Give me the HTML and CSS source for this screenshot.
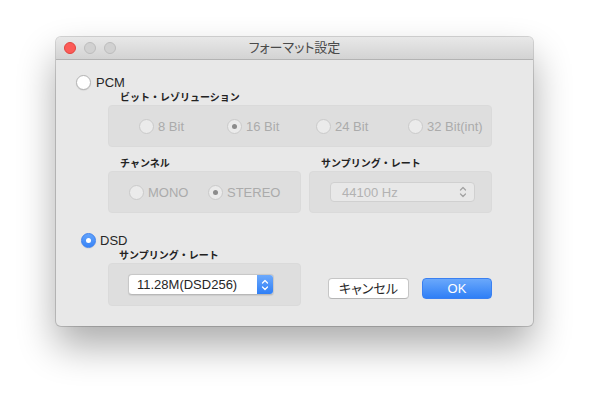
FILE: index.html
```html
<!DOCTYPE html>
<html lang="ja">
<head>
<meta charset="utf-8">
<title>フォーマット設定</title>
<link rel="stylesheet" href="styles.css">
</head>
<body>
<div class="window">
  <div class="titlebar">
    <div class="lights">
      <span class="light close"></span>
      <span class="light"></span>
      <span class="light"></span>
    </div>
    <div class="title">フォーマット設定</div>
    <div></div>
  </div>
  <div class="content">
    <div class="radio-row pcm"><span class="radio"></span><span class="rtext">PCM</span></div>
    <div class="group-label res-label">ビット・レゾリューション</div>
    <div class="box res">
      <div class="opt"><span class="radio dis"></span>8 Bit</div>
      <div class="opt"><span class="radio dis on"></span>16 Bit</div>
      <div class="opt"><span class="radio dis"></span>24 Bit</div>
      <div class="opt"><span class="radio dis"></span>32 Bit(int)</div>
    </div>
    <div class="pair">
      <div class="col ch-col">
        <div class="group-label">チャンネル</div>
        <div class="box ch">
          <div class="opt"><span class="radio dis"></span>MONO</div>
          <div class="opt"><span class="radio dis on"></span>STEREO</div>
        </div>
      </div>
      <div class="col sr-col">
        <div class="group-label">サンプリング・レート</div>
        <div class="box sr">
          <div class="popup dis">
            <span class="ptext">44100 Hz</span>
            <span class="arrows"><svg width="8" height="14" viewBox="0 0 8 14"><polyline points="1.5,5 4,2.5 6.5,5"/><polyline points="1.5,9 4,11.5 6.5,9"/></svg></span>
          </div>
        </div>
      </div>
    </div>
    <div class="radio-row dsd"><span class="radio sel"></span><span class="rtext">DSD</span></div>
    <div class="bottom">
      <div class="col ch-col">
        <div class="group-label dsd-label">サンプリング・レート</div>
        <div class="box dsdbox">
          <div class="popup">
            <span class="ptext">11.28M(DSD256)</span>
            <span class="arrows"><svg width="8" height="14" viewBox="0 0 8 14"><polyline points="1.5,5 4,2.5 6.5,5"/><polyline points="1.5,9 4,11.5 6.5,9"/></svg></span>
          </div>
        </div>
      </div>
      <div class="buttons">
        <button class="btn cancel">キャンセル</button>
        <button class="btn ok">OK</button>
      </div>
    </div>
  </div>
</div>
</body>
</html>
```
FILE: styles.css
```css
html, body {
  margin: 0;
  padding: 0;
  background: #ffffff;
}
body {
  font-family: "Liberation Sans", "Noto Sans CJK JP", sans-serif;
  font-size: 13px;
  color: #262626;
  min-height: 400px;
  padding-top: 1px;
  box-sizing: border-box;
}
.window {
  width: 477px;
  height: 289px;
  margin: 36px 0 0 56px;
  background: #e8e8e8;
  border-radius: 5px;
  overflow: hidden;
  box-shadow: 0 0 0 1px rgba(0,0,0,0.16), 0 20px 38px rgba(0,0,0,0.33);
}
.titlebar {
  height: 22px;
  border-bottom: 1px solid #b3b3b3;
  background: linear-gradient(#e8e8e8, #d3d3d3);
  display: grid;
  grid-template-columns: 1fr auto 1fr;
  align-items: center;
}
.lights {
  display: flex;
  gap: 8px;
  padding-left: 8px;
}
.light {
  width: 12px;
  height: 12px;
  border-radius: 50%;
  box-sizing: border-box;
  background: #d1d1d1;
  border: 1px solid #bcbcbc;
}
.light.close {
  background: #fc5b57;
  border-color: #e0443e;
}
.title {
  font-size: 13px;
  color: #4a4a4a;
  font-feature-settings: "palt";
  line-height: 22px;
}
.content {
  display: flex;
  flex-direction: column;
}
.radio-row {
  display: flex;
  align-items: center;
  height: 15px;
}
.radio-row.pcm {
  margin: 15px 0 0 20px;
  gap: 5px;
}
.radio-row.dsd {
  margin: 20px 0 0 25px;
  gap: 4px;
}
.rtext {
  font-size: 13px;
  color: #262626;
}
.radio {
  width: 15px;
  height: 15px;
  border-radius: 50%;
  box-sizing: border-box;
  border: 1px solid #b4b4b4;
  background: #ffffff;
  box-shadow: 0 0.5px 1px rgba(0,0,0,0.12);
  flex: none;
  display: grid;
  place-items: center;
}
.radio.dis {
  background: #ebebeb;
  border-color: #cacaca;
  box-shadow: none;
}
.radio.dis.on::after {
  content: "";
  width: 5px;
  height: 5px;
  border-radius: 50%;
  background: #8c8c8c;
}
.radio.sel {
  background: linear-gradient(#62a3fb, #3884f7);
  border-color: #3b80ef;
}
.radio.sel::after {
  content: "";
  width: 5px;
  height: 5px;
  border-radius: 50%;
  background: #ffffff;
}
.group-label {
  font-size: 10px;
  font-weight: bold;
  line-height: 14px;
  height: 14px;
  color: #222222;
  margin-left: 12px;
  white-space: nowrap;
}
.res-label {
  margin: 1px 0 0 64px;
}
.box {
  background: #dedede;
  border-radius: 4px;
  box-sizing: border-box;
  border: 1px solid #dadada;
}
.box.res {
  margin-left: 52px;
  width: 384px;
  height: 42px;
  display: grid;
  grid-template-columns: 88px 89px 92px auto;
  align-items: center;
  padding-left: 30px;
}
.opt {
  display: flex;
  align-items: center;
  gap: 4px;
  color: #ababab;
  font-size: 13px;
  white-space: nowrap;
}
.pair {
  display: flex;
  gap: 8px;
  margin: 10px 0 0 52px;
}
.ch-col {
  width: 193px;
}
.sr-col {
  width: 183px;
}
.box.ch {
  height: 42px;
  display: grid;
  grid-template-columns: 79px auto;
  align-items: center;
  padding-left: 20px;
}
.box.sr {
  height: 42px;
  display: flex;
  align-items: center;
  padding-left: 20px;
}
.popup {
  box-sizing: border-box;
  height: 21px;
  border-radius: 4px;
  background: #ffffff;
  border: 1px solid #c8c8c8;
  border-bottom-color: #b8b8b8;
  display: flex;
  align-items: center;
  justify-content: space-between;
  overflow: hidden;
  box-shadow: 0 0.5px 1px rgba(0,0,0,0.08);
}
.popup.dis {
  width: 145px;
  height: 20px;
  background: #e8e8e8;
  border-color: #d0d0d0;
  box-shadow: none;
}
.ptext {
  padding-left: 8px;
  font-size: 13px;
  color: #262626;
  white-space: nowrap;
}
.popup.dis .ptext {
  padding-left: 11px;
  color: #b2b2b2;
}
.arrows {
  width: 16px;
  align-self: stretch;
  display: grid;
  place-items: center;
  background: linear-gradient(#6ca9fc, #2f7ff6);
}
.arrows svg polyline {
  fill: none;
  stroke: #ffffff;
  stroke-width: 1.3;
  stroke-linecap: round;
  stroke-linejoin: round;
}
.popup.dis .arrows {
  background: none;
  margin-right: 3px;
}
.popup.dis .arrows svg polyline {
  stroke: #a3a3a3;
}
.dsd-label {
  margin: 1px 0 0 11px;
}
.bottom {
  display: flex;
  align-items: flex-start;
  margin-left: 52px;
}
.box.dsdbox {
  height: 43px;
  display: flex;
  align-items: center;
  padding-left: 19px;
}
.dsdbox .popup {
  width: 146px;
}
.buttons {
  display: flex;
  gap: 13px;
  margin: 30px 0 0 27px;
}
.btn {
  font-family: "Liberation Sans", "Noto Sans CJK JP", sans-serif;
  font-size: 13px;
  height: 21px;
  padding: 0;
  border-radius: 4px;
  box-sizing: border-box;
  line-height: 19px;
  font-feature-settings: "palt";
}
.btn.cancel {
  width: 81px;
  background: #ffffff;
  border: 1px solid #c6c6c6;
  border-bottom-color: #b5b5b5;
  color: #262626;
}
.btn.ok {
  width: 70px;
  background: linear-gradient(#6aa8fb, #2f7ff6);
  border: 1px solid #3a80f1;
  color: #ffffff;
}
```
